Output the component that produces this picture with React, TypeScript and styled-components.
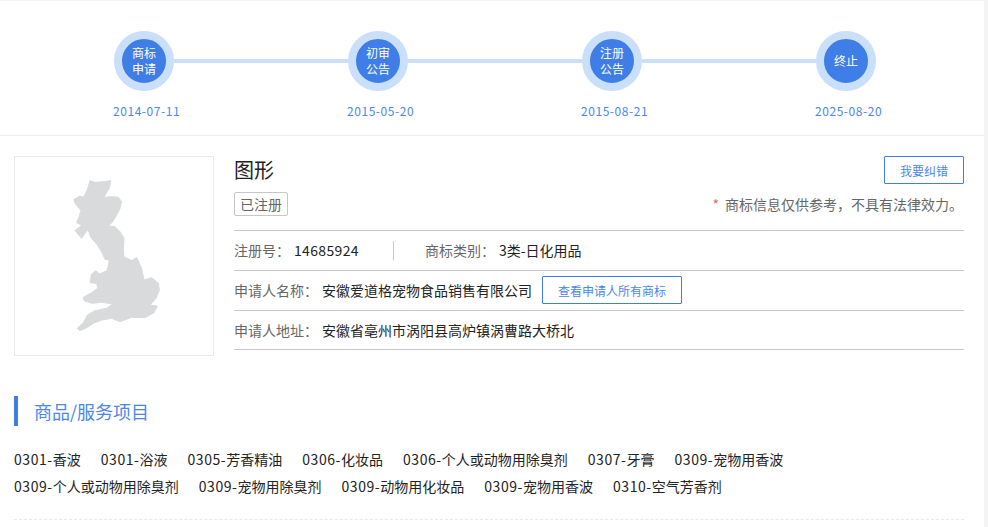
import React from "react";
import styled, { createGlobalStyle } from "styled-components";

const Global = createGlobalStyle`
  html, body { margin: 0; padding: 0; background: #f4f4f4; }
  body { font-family: "Noto Sans CJK SC", "Liberation Sans", sans-serif; color: #333; overflow: hidden; }
`;
const Page = styled.div`
  width: 984px;
  height: 526px;
  margin-top: 1px;
  background: #fff;
  overflow: hidden;
`;
const Timeline = styled.div`
  height: 135px;
  box-sizing: border-box;
  padding: 30px 0 0 114px;
  border-bottom: 1px solid #eee;
  display: flex;
`;
const Step = styled.div<{ $last?: boolean }>`
  width: ${(p) => (p.$last ? "60px" : "234px")};
  flex: none;
  position: relative;
  &::after {
    content: "";
    display: ${(p) => (p.$last ? "none" : "block")};
    position: absolute;
    left: 60px;
    top: 28px;
    width: 174px;
    height: 4px;
    background: #c9dffa;
  }
`;
const Ring = styled.div`
  width: 60px;
  height: 60px;
  box-sizing: border-box;
  border: 8px solid #c9dffa;
  border-radius: 50%;
  background: #3f7ee6;
  color: #fff;
  font-size: 12px;
  line-height: 16px;
  display: flex;
  align-items: center;
  justify-content: center;
  text-align: center;
`;
const DateText = styled.div`
  margin-top: 11px;
  margin-left: -1px;
  font-size: 12px;
  line-height: 18px;
  letter-spacing: 0.55px;
  color: #4b86ea;
  white-space: nowrap;
`;
const Info = styled.div`
  display: flex;
  padding: 20px 20px 0 14px;
  gap: 20px;
`;
const Picture = styled.div`
  width: 200px;
  height: 200px;
  flex: none;
  box-sizing: border-box;
  border: 1px solid #eaeaea;
`;
const MapSvg = styled.svg`
  display: block;
  width: 198px;
  height: 198px;
`;
const Details = styled.div`
  flex: 1;
  min-width: 0;
`;
const Head = styled.div`
  display: flex;
  justify-content: space-between;
  align-items: flex-start;
  height: 36px;
`;
const Name = styled.div`
  font-size: 20px;
  line-height: 28px;
  color: #222;
`;
const OutlineButton = styled.button<{ $w: number; $h: number }>`
  width: ${(p) => p.$w}px;
  height: ${(p) => p.$h}px;
  padding: 0;
  border: 1px solid #3f7ee6;
  border-radius: 1px;
  background: #fff;
  color: #4b86ea;
  font: inherit;
  font-size: 12px;
  flex: none;
`;
const StatusRow = styled.div`
  display: flex;
  justify-content: space-between;
  align-items: flex-start;
  height: 39px;
  box-sizing: border-box;
  border-bottom: 1px solid #c8c8c8;
`;
const Tag = styled.span`
  height: 24px;
  width: 54px;
  box-sizing: border-box;
  border: 1px solid #c6c6c6;
  border-radius: 2px;
  font-size: 14px;
  line-height: 22px;
  text-align: center;
  color: #666;
`;
const Note = styled.div`
  font-size: 14px;
  line-height: 24px;
  color: #666;
  margin-right: 1px;
  & > i { color: #e66; font-style: normal; margin-right: 6px; }
`;
const Row = styled.div<{ $h: number }>`
  display: flex;
  align-items: center;
  height: ${(p) => p.$h}px;
  padding-bottom: ${(p) => p.$h - 39}px;
  box-sizing: border-box;
  border-bottom: 1px solid #c8c8c8;
  font-size: 14px;
  white-space: nowrap;
`;
const Label = styled.span`
  color: #666;
`;
const Value = styled.span`
  color: #222;
  margin-left: 4px;
`;
const Digits = styled(Value)`
  letter-spacing: 0.35px;
`;
const Divider = styled.span`
  width: 1px;
  height: 19px;
  background: #c8c8c8;
  margin: 0 31px 0 34px;
`;
const ApplicantButton = styled(OutlineButton)`
  margin-left: 10px;
`;
const Section = styled.div`
  margin: 40px 0 0 14px;
  padding-left: 16px;
  height: 30px;
  line-height: 30px;
  border-left: 4px solid #3f7ee6;
  box-sizing: border-box;
  font-size: 18px;
  color: #4b86ea;
`;
const Goods = styled.div`
  margin: 20px 20px 0 14px;
  padding-bottom: 19px;
  border-bottom: 1px dashed #e8e8e8;
  display: flex;
  flex-wrap: wrap;
  column-gap: 20px;
  font-size: 14px;
  line-height: 27px;
  color: #222;
`;
const Code = styled.span`
  letter-spacing: 0.56px;
`;

const steps = [
  { a: "商标", b: "申请", d: "2014-07-11" },
  { a: "初审", b: "公告", d: "2015-05-20" },
  { a: "注册", b: "公告", d: "2015-08-21" },
  { a: "终止", b: "", d: "2025-08-20" },
];
const goods = [
  ["0301-", "香波"], ["0301-", "浴液"], ["0305-", "芳香精油"], ["0306-", "化妆品"], ["0306-", "个人或动物用除臭剂"], ["0307-", "牙膏"], ["0309-", "宠物用香波"],
  ["0309-", "个人或动物用除臭剂"], ["0309-", "宠物用除臭剂"], ["0309-", "动物用化妆品"], ["0309-", "宠物用香波"], ["0310-", "空气芳香剂"],
];
const mapPath =
  "M270 122L285 127L300 126L318 124L332 122L328 145L318 160L312 172L335 170L355 172L365 185L360 205L350 225L338 245L326 258L345 260L360 275L372 295L370 330L372 350L395 362L410 352L418 370L425 385L432 420L455 413L475 430L478 450L468 475L450 495L472 498L462 518L435 533L395 532L360 545L335 535L305 540L280 550L262 562L240 572L232 565L250 548L262 525L285 512L320 505L338 492L305 487L275 490L252 482L250 472L275 458L293 445L290 430L270 428L275 402L288 392L298 402L322 392L328 360L315 358L305 335L290 312L272 292L265 270L258 275L245 295L225 272L245 256L230 248L238 228L243 212L225 190L222 178L240 168L250 172L262 150Z";

export default function App() {
  return (
    <Page>
      <Global />
      <Timeline>
        {steps.map((s, i) => (
          <Step key={s.d} $last={i === steps.length - 1}>
            <Ring>
              <span>
                {s.a}
                {s.b && <br />}
                {s.b}
              </span>
            </Ring>
            <DateText>{s.d}</DateText>
          </Step>
        ))}
      </Timeline>
      <Info>
        <Picture>
          <MapSvg viewBox="45 51 594 594">
            <path d={mapPath} fill="#d9dadc" stroke="#d9dadc" strokeWidth="3" strokeLinejoin="round" />
          </MapSvg>
        </Picture>
        <Details>
          <Head>
            <Name>图形</Name>
            <OutlineButton $w={80} $h={28}>我要纠错</OutlineButton>
          </Head>
          <StatusRow>
            <Tag>已注册</Tag>
            <Note><i>*</i>商标信息仅供参考，不具有法律效力。</Note>
          </StatusRow>
          <Row $h={40}>
            <Label>注册号：</Label>
            <Digits>14685924</Digits>
            <Divider />
            <Label>商标类别：</Label>
            <Value>3类-日化用品</Value>
          </Row>
          <Row $h={40}>
            <Label>申请人名称：</Label>
            <Value>安徽爱道格宠物食品销售有限公司</Value>
            <ApplicantButton $w={140} $h={28}>查看申请人所有商标</ApplicantButton>
          </Row>
          <Row $h={39}>
            <Label>申请人地址：</Label>
            <Value>安徽省亳州市涡阳县高炉镇涡曹路大桥北</Value>
          </Row>
        </Details>
      </Info>
      <Section>商品/服务项目</Section>
      <Goods>
        {goods.map(([code, name], i) => (
          <span key={i}>
            <Code>{code}</Code>
            {name}
          </span>
        ))}
      </Goods>
    </Page>
  );
}
